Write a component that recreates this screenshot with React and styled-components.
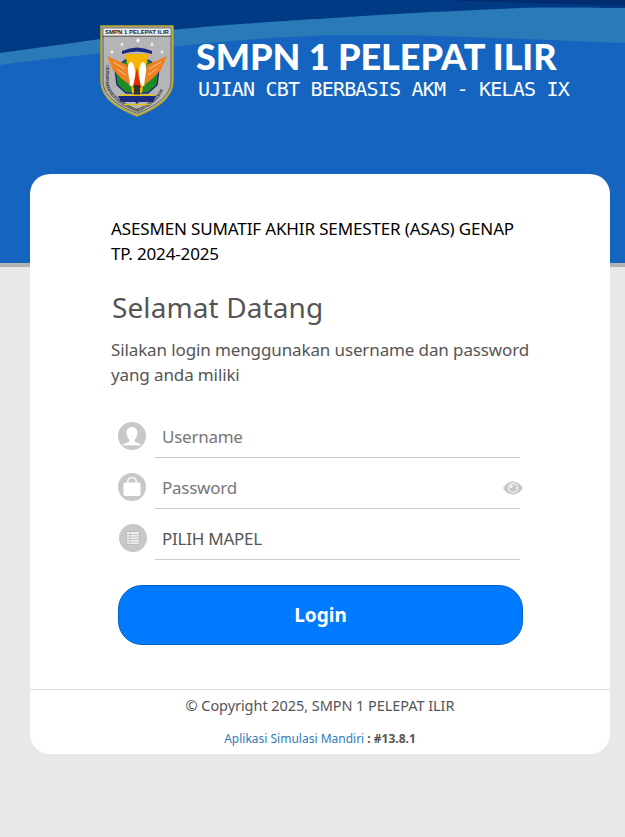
import styled, { createGlobalStyle } from "styled-components";
import { useState } from "react";

const GlobalStyle = createGlobalStyle`
    html, body {
        margin: 0;
        padding: 0;
        background: #e8e8e8;
        font-family: "Noto Sans", "Open Sans", sans-serif;
    }
    * {
        box-sizing: border-box;
    }
`;

const Page = styled.div`
    width: 625px;
    height: 837px;
    overflow: hidden;
`;

const Hero = styled.header`
    position: relative;
    height: 267px;
    background: #1565c0;
    border-bottom: 4px solid #b3b3b3;
    overflow: hidden;
`;

const Wave = styled.svg`
    position: absolute;
    top: 0;
    left: 0;
    width: 625px;
    height: 70px;
`;

const Brand = styled.div`
    position: relative;
    display: flex;
    align-items: flex-start;
    padding: 25px 0 0 100px;
`;

const BrandText = styled.div`
    display: flex;
    flex-direction: column;
    margin: 11px 0 0 22px;
    color: #fff;
`;

const SchoolName = styled.h1`
    margin: 0;
    font-family: Lato, sans-serif;
    font-size: 36px;
    line-height: 41px;
    font-weight: 900;
    letter-spacing: -0.07px;
    white-space: nowrap;
`;

const ExamName = styled.div`
    margin: 0 0 0 2px;
    font-family: "DejaVu Sans Mono", monospace;
    font-size: 20px;
    line-height: 24px;
    letter-spacing: -0.8px;
    white-space: nowrap;
`;

const Card = styled.main`
    position: relative;
    width: 580px;
    height: 580px;
    margin: -93px 0 0 30px;
    background: #fff;
    border-radius: 20px;
    display: flex;
    flex-direction: column;
`;

const CardBody = styled.div`
    flex: 1;
    padding: 42px 60px 0 81px;
`;

const ExamTitle = styled.div`
    color: #000;
    font-size: 17px;
    line-height: 25px;
    letter-spacing: -0.14px;
`;

const Welcome = styled.h2`
    margin: 21px 0 0;
    color: #555;
    font-size: 28px;
    line-height: 40px;
    font-weight: 400;
    letter-spacing: 0.1px;
    text-indent: 1px;
`;

const Intro = styled.p`
    margin: 10px 0 0;
    color: #555;
    font-size: 17px;
    line-height: 25px;
    letter-spacing: -0.12px;
    max-width: 425px;
`;

const Form = styled.form`
    margin: 29px 0 0 7px;
    display: flex;
    flex-direction: column;
`;

const Field = styled.label`
    position: relative;
    height: 51px;
    display: flex;
    align-items: flex-start;
`;

const FieldIcon = styled.span`
    width: 28px;
    height: 28px;
    flex: none;
    margin-left: ${(p) => p.$offset || 0}px;
    margin-right: ${(p) => 9 - (p.$offset || 0)}px;
    margin-top: 6px;
    border-radius: 50%;
    background: #c8c8c8;
    overflow: hidden;
    display: flex;
    align-items: center;
    justify-content: center;
`;

const FieldLine = styled.span`
    width: 365px;
    height: 42px;
    display: flex;
    align-items: center;
    padding-left: 7px;
    border-bottom: 1px solid #ccc;
    color: ${(p) => (p.$value ? "#555" : "#777")};
    font-size: 17px;
    letter-spacing: -0.25px;
`;

const EyeButton = styled.span`
    position: absolute;
    top: 14px;
    left: 384px;
    width: 22px;
    height: 14px;
    display: flex;
`;

const LoginButton = styled.button`
    width: 405px;
    height: 60px;
    margin-top: 16px;
    border: 1px solid #0062cc;
    border-radius: 24px;
    background: #007bff;
    color: #fff;
    font-family: inherit;
    font-size: 19px;
    font-weight: 700;
    cursor: pointer;
`;

const CardFooter = styled.footer`
    height: 65px;
    border-top: 1px solid #ddd;
    text-align: center;
    color: #555;
`;

const Copyright = styled.div`
    margin-top: 5px;
    font-size: 14.5px;
    line-height: 20px;
    letter-spacing: -0.06px;
`;

const Version = styled.div`
    margin-top: 16px;
    font-size: 12px;
    line-height: 16px;
    b {
        font-weight: 700;
    }
`;

const AppLink = styled.a`
    color: #337ab7;
    text-decoration: none;
`;

function Logo() {
    return (
        <svg width="74" height="92" viewBox="0 0 74 92">
            <defs>
                <path id="logoRing" d="M5.5 40 V56 C5.5 72 24 82 37 87 C50 82 68.5 72 68.5 40" />
            </defs>
            <path d="M1 1 H73 V56 C73 75 52 85 37 91 C22 85 1 75 1 56 Z" fill="#b5b5b8" stroke="#b7a520" strokeWidth="1.6" />
            <path d="M3 11 H71 V56 C71 73 51 83 37 88.5 C23 83 3 73 3 56 Z" fill="none" stroke="#3b3b20" strokeWidth="0.7" />
            <rect x="3" y="3" width="68" height="8" fill="#ededed" stroke="#333" strokeWidth="0.6" />
            <text x="37" y="9.4" textAnchor="middle" fontFamily="Liberation Sans" fontSize="6" fontWeight="700" fill="#222">SMPN 1 PELEPAT ILIR</text>
            <text fontFamily="Liberation Sans" fontSize="4.4" fontWeight="700" fill="#3a3a30">
                <textPath href="#logoRing" textLength="98">CERDAS BERPRESTASI BERIMAN DAN BERBUDAYA</textPath>
            </text>
            <path d="M12 25 l1.5 2 l-1.5 2 l-1.5 -2 Z M22 17.5 l1.5 2 l-1.5 2 l-1.5 -2 Z M38 13 l2 2.5 l-2 2.5 l-2 -2.5 Z M52 17.5 l1.5 2 l-1.5 2 l-1.5 -2 Z M62 25 l1.5 2 l-1.5 2 l-1.5 -2 Z" fill="#f2f2f2" />
            <path d="M22 26 Q37 19 52 26 L52 29 Q37 24 22 29 Z" fill="#1c2a80" />
            <path d="M24 36 L37 30 L50 36 L59 44 L57 60 L48 68 L26 68 L17 60 L15 44 Z" fill="#1f8a24" stroke="#1c2a80" strokeWidth="1.4" />
            <path d="M25 29 H49 L45 46 L42 68 H32 L29 46 Z" fill="#f4b400" />
            <ellipse cx="31" cy="49" rx="4" ry="12" fill="#fff" />
            <ellipse cx="43" cy="49" rx="4" ry="12" fill="#fff" />
            <path d="M37 42 L41 63 H33 Z" fill="#e8290b" />
            <path d="M7 31 L27 40 L30 60 L22 54 L13 45 Z" fill="#f08020" />
            <path d="M67 31 L47 40 L44 60 L52 54 L61 45 Z" fill="#f08020" />
            <path d="M13 37 L25 44 M17 44 L26 50 M61 37 L49 44 M57 44 L48 50" stroke="#e8c9a0" strokeWidth="1" />
            <path d="M34 60 H40 V70 H34 Z" fill="#333" />
            <path d="M18 71 H56 L53 77 H39 L37 79 L35 77 H21 Z" fill="#1c2a80" />
            <path d="M22 69.5 H52 L56 71 H18 Z" fill="#e6c200" />
            <path d="M24 79.5 H50" stroke="#e6c200" strokeWidth="1" />
        </svg>
    );
}

function UserIcon() {
    return (
        <svg width="28" height="28" viewBox="0 0 28 28">
            <path d="M14 5 C17.8 5 19.4 7.6 19.4 11 C19.4 14.2 17.8 16.8 16.6 17.8 V19 C16.6 19.8 17.6 20.2 19.2 20.8 C21.6 21.6 23.4 22.2 24 23.2 H4 C4.6 22.2 6.4 21.6 8.8 20.8 C10.4 20.2 11.4 19.8 11.4 19 V17.8 C10.2 16.8 8.6 14.2 8.6 11 C8.6 7.6 10.2 5 14 5 Z" fill="#fff" />
        </svg>
    );
}

function LockIcon() {
    return (
        <svg width="28" height="28" viewBox="0 0 28 28">
            <path d="M9.8 10 V8.5 C9.8 6 11.6 4.6 14 4.6 C16.4 4.6 18.2 6 18.2 8.5 V10" fill="none" stroke="#fff" strokeWidth="1.3" />
            <rect x="5.5" y="9.5" width="17" height="13.5" rx="2" fill="#fff" />
        </svg>
    );
}

function ListIcon() {
    return (
        <svg width="28" height="28" viewBox="0 0 28 28">
            <rect x="7.5" y="7.5" width="13" height="13" fill="#f0f0f0" stroke="#bdbdbd" strokeWidth="1" />
            <path d="M7.5 10.5 H20.5 M7.5 13 H20.5 M7.5 15.5 H20.5 M7.5 18 H20.5 M11 7.5 V20.5" stroke="#c4c4c4" strokeWidth="1" />
        </svg>
    );
}

function EyeIcon() {
    return (
        <svg width="22" height="14" viewBox="0 0 22 14">
            <path d="M1 7 C4 2.5 7.5 0.5 11 0.5 C14.5 0.5 18 2.5 21 7 C18 11.5 14.5 13.5 11 13.5 C7.5 13.5 4 11.5 1 7 Z" fill="#c8c8c8" />
            <circle cx="11" cy="7" r="5" fill="#fff" />
            <circle cx="11" cy="7" r="4" fill="#c8c8c8" />
            <circle cx="9.4" cy="5.4" r="1.3" fill="#fff" />
        </svg>
    );
}

export default function App() {
    const [fields] = useState([
        { name: "Username", icon: <UserIcon /> },
        { name: "Password", icon: <LockIcon />, eye: true },
        { name: "PILIH MAPEL", icon: <ListIcon />, offset: 1, value: true }
    ]);

    return (
        <Page>
            <GlobalStyle />
            <Hero>
                <Wave viewBox="0 0 625 70" preserveAspectRatio="none">
                    <rect width="625" height="70" fill="#1565c0" />
                    <path d="M0 0 H625 V43 C530 40 450 34 333 35 C300 36 220 40 146 50 C100 53 50 58 0 65 Z" fill="#2a7ab8" />
                    <path d="M0 0 H625 V8 C580 8 560 7 520 8 C420 12 360 16 300 20 C240 24 190 27 146 33 C100 39 50 46 0 53 Z" fill="#013a84" />
                    <path d="M440 0 H625 V6 C560 4 500 2 440 0 Z" fill="#012d70" />
                </Wave>
                <Brand>
                    <Logo />
                    <BrandText>
                        <SchoolName>SMPN 1 PELEPAT ILIR</SchoolName>
                        <ExamName>UJIAN CBT BERBASIS AKM - KELAS IX</ExamName>
                    </BrandText>
                </Brand>
            </Hero>
            <Card>
                <CardBody>
                    <ExamTitle>
                        ASESMEN SUMATIF AKHIR SEMESTER (ASAS) GENAP
                        <br />
                        TP. 2024-2025
                    </ExamTitle>
                    <Welcome>Selamat Datang</Welcome>
                    <Intro>Silakan login menggunakan username dan password yang anda miliki</Intro>
                    <Form onSubmit={(e) => e.preventDefault()}>
                        {fields.map((field) => (
                            <Field key={field.name}>
                                <FieldIcon $offset={field.offset}>{field.icon}</FieldIcon>
                                <FieldLine $value={field.value}>{field.name}</FieldLine>
                                {field.eye && (
                                    <EyeButton>
                                        <EyeIcon />
                                    </EyeButton>
                                )}
                            </Field>
                        ))}
                        <LoginButton type="submit">Login</LoginButton>
                    </Form>
                </CardBody>
                <CardFooter>
                    <Copyright>© Copyright 2025, SMPN 1 PELEPAT ILIR</Copyright>
                    <Version>
                        <AppLink href="#">Aplikasi Simulasi Mandiri</AppLink> <b>: #13.8.1</b>
                    </Version>
                </CardFooter>
            </Card>
        </Page>
    );
}
